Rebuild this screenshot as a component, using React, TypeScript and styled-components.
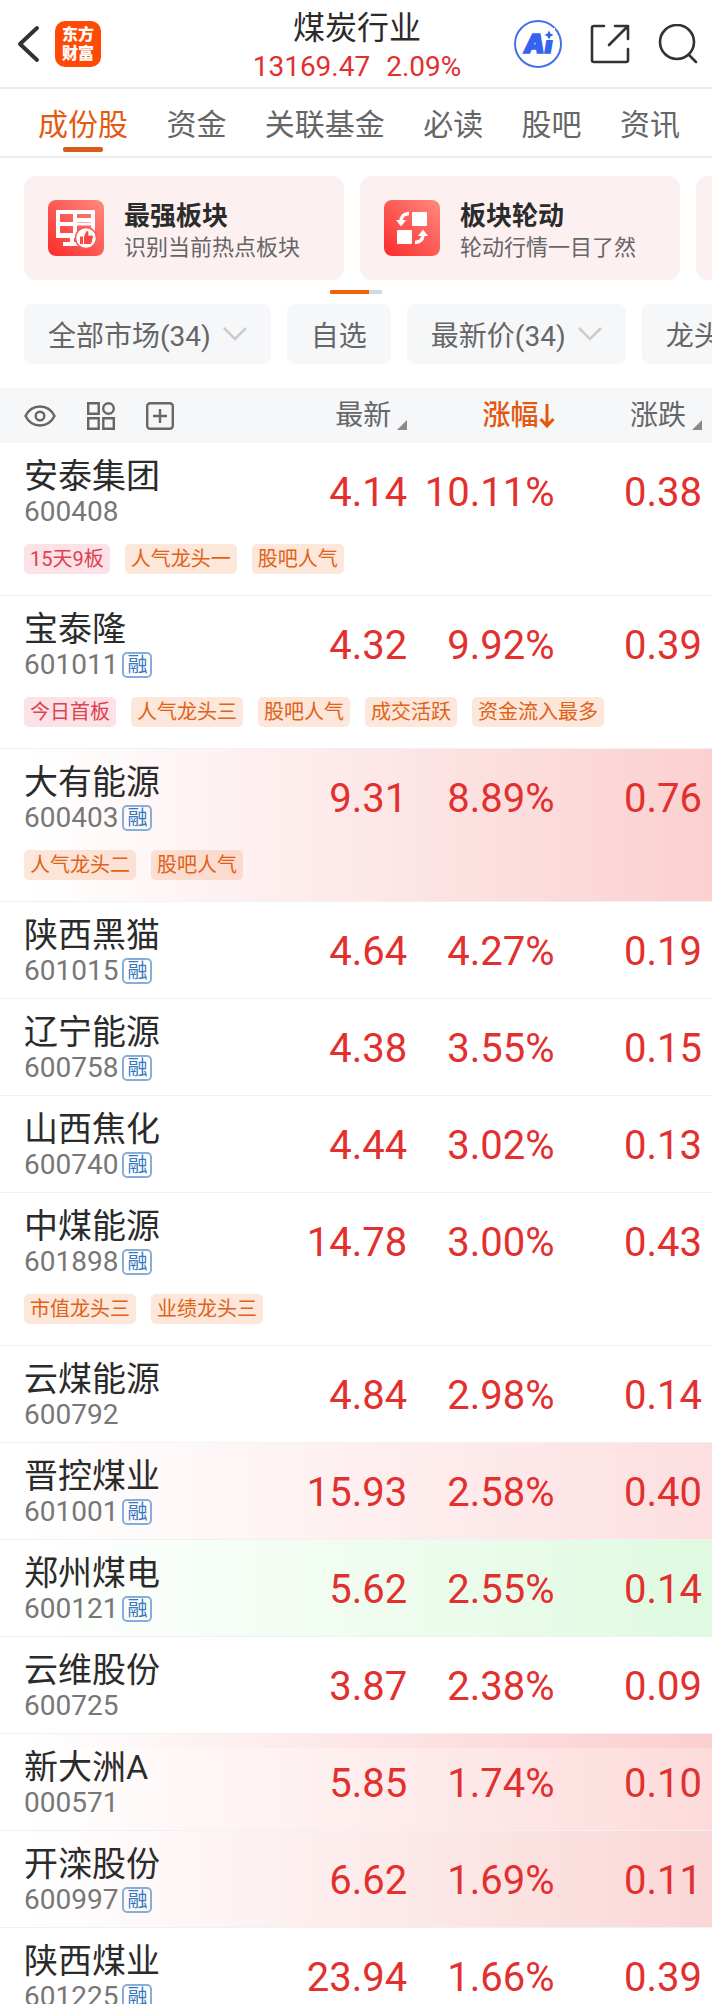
import React from "react";
import styled, { createGlobalStyle } from "styled-components";

const RED = "#e2302f";
const ORANGE = "#e2590f";

const GlobalStyle = createGlobalStyle`
  * { box-sizing: border-box; }
  html, body, #root { height: 100%; }
  body {
    margin: 0;
    background: #fff;
    color: #2b2b2b;
    font-family: Roboto, "Noto Sans CJK SC", sans-serif;
  }
  button {
    margin: 0;
    padding: 0;
    border: 0;
    background: none;
    color: inherit;
    font: inherit;
    cursor: pointer;
  }
  a { color: inherit; text-decoration: none; }
  h1, h2, p { margin: 0; font-weight: 400; }
  svg { display: block; flex: none; }
`;

const Page = styled.div`
  display: flex;
  flex-direction: column;
  height: 100vh;
  overflow: hidden;
`;

const Header = styled.header`
  display: grid;
  grid-template-columns: 1fr auto 1fr;
  align-items: center;
  flex: none;
  height: 89px;
  padding: 0 14px 0 16px;
  border-bottom: 2px solid #e9e9eb;
`;

const HeaderSide = styled.div<{ $end?: boolean }>`
  display: flex;
  align-items: center;
  justify-content: ${(p) => (p.$end ? "flex-end" : "flex-start")};
  gap: ${(p) => (p.$end ? "28px" : "13px")};
`;

const Logo = styled.a`
  display: flex;
  flex-direction: column;
  align-items: center;
  justify-content: center;
  width: 46px;
  height: 46px;
  border-radius: 10px;
  background: #ff4a05;
  color: #fff;
  font-size: 16px;
  font-weight: 900;
  line-height: 19px;
`;

const Heading = styled.div`
  padding-top: 4px;
  text-align: center;
`;

const Title = styled.h1`
  font-size: 32px;
  line-height: 40px;
`;

const Quote = styled.p`
  display: flex;
  justify-content: center;
  gap: 16px;
  margin-top: 3px;
  color: ${RED};
  font-size: 28px;
  line-height: 32px;
`;

const Tabs = styled.nav`
  display: flex;
  flex: none;
  justify-content: space-between;
  height: 69px;
  padding: 0 32px 0 38px;
  border-bottom: 2px solid #ececee;
`;

const Tab = styled.a<{ $active?: boolean }>`
  display: flex;
  flex-direction: column;
  align-items: center;
  padding-top: 16px;
  color: ${(p) => (p.$active ? ORANGE : "#666")};
  font-size: 30px;
  line-height: 40px;
  white-space: nowrap;

  &::after {
    content: "";
    width: 40px;
    height: 5px;
    margin-top: 2px;
    border-radius: 2px;
    background: ${(p) => (p.$active ? "#d95a1b" : "transparent")};
  }
`;

const Scroller = styled.div`
  display: flex;
  flex: none;
  gap: 16px;
  padding: 0 24px;
  overflow-x: auto;
  scrollbar-width: none;
`;

const Cards = styled(Scroller)`
  margin-top: 18px;
`;

const Card = styled.a`
  display: flex;
  flex: none;
  align-items: center;
  gap: 20px;
  width: 320px;
  height: 104px;
  padding: 0 24px;
  border-radius: 12px;
  background: #fdf0f0;
`;

const CardText = styled.div`
  padding-top: 8px;
`;

const CardTitle = styled.h2`
  font-size: 26px;
  font-weight: 700;
  line-height: 32px;
  white-space: nowrap;
`;

const CardNote = styled.p`
  color: #666;
  font-size: 22px;
  line-height: 32px;
  white-space: nowrap;
`;

const Pager = styled.div`
  flex: none;
  align-self: center;
  width: 52px;
  height: 4px;
  margin: 10px 0;
  border-radius: 1px;
  background: linear-gradient(to right, #f2600f 75%, #d5d8de 75%);
`;

const Filter = styled.button`
  display: flex;
  flex: none;
  align-items: center;
  gap: 12px;
  height: 60px;
  padding: 0 24px;
  border-radius: 8px;
  background: #f6f7f9;
  color: #666;
  font-size: 28px;
  white-space: nowrap;
`;

const ListArea = styled.main`
  flex: 1;
  min-height: 0;
  margin-top: 24px;
  overflow-y: auto;
  scrollbar-width: none;
`;

const Table = styled.table`
  display: block;
`;

const columns = `
  display: grid;
  grid-template-columns: 8fr 5fr 5fr 5fr;
  padding: 0 10px 0 24px;
`;

const Head = styled.thead`
  display: block;
  position: sticky;
  top: 0;
  background: #f6f7f9;
`;

const HeadRow = styled.tr`
  ${columns}
  height: 55px;
`;

const HeadCell = styled.th<{ $active?: boolean }>`
  display: flex;
  align-items: center;
  justify-content: flex-end;
  padding: 0;
  color: ${(p) => (p.$active ? ORANGE : "#666")};
  font-size: 28px;
  font-weight: ${(p) => (p.$active ? 500 : 400)};
`;

const Tools = styled.th`
  display: flex;
  align-items: center;
  gap: 31px;
  padding: 0;
  color: #666;
`;

const SortButton = styled.button<{ $tight?: boolean }>`
  display: flex;
  align-items: center;
  gap: ${(p) => (p.$tight ? "0" : "6px")};
  line-height: 32px;
  white-space: nowrap;
`;

const Corner = styled.span`
  align-self: flex-end;
  margin-bottom: 2px;
  border-left: 10px solid transparent;
  border-bottom: 10px solid #8a8a8a;
`;

const Body = styled.tbody`
  display: block;
`;

const Row = styled.tr<{ $flash?: string }>`
  ${columns}
  border-bottom: 1px solid #f0f1f3;
  background: ${(p) => p.$flash ?? "none"};
`;

const NameCell = styled.th`
  padding: 13px 0 11px;
  font-weight: 400;
  text-align: left;
  white-space: nowrap;
`;

const Name = styled.a`
  display: block;
  font-size: 34px;
  line-height: 40px;
`;

const CodeLine = styled.div`
  display: flex;
  align-items: center;
  gap: 4px;
  color: #777;
  font-size: 28px;
  line-height: 32px;
`;

const MarginBadge = styled.span`
  width: 30px;
  height: 26px;
  border: 2px solid #86aedb;
  border-radius: 5px;
  color: #3578bf;
  font-size: 20px;
  line-height: 22px;
  text-align: center;
`;

const Value = styled.td`
  padding: 3px 0 0;
  color: ${RED};
  font-size: 40px;
  line-height: 93px;
  text-align: right;
`;

const TagCell = styled.td`
  display: flex;
  grid-column: 1 / -1;
  gap: 15px;
  padding: 5px 0 21px;
`;

const Tag = styled.span<{ $hot?: boolean }>`
  height: 30px;
  padding: 0 6px;
  border-radius: 5px;
  background: ${(p) => (p.$hot ? "rgba(233, 45, 75, 0.14)" : "rgba(240, 100, 25, 0.16)")};
  color: ${(p) => (p.$hot ? "#dc4250" : "#e06216")};
  font-size: 20px;
  line-height: 30px;
  white-space: nowrap;
`;

type Stock = {
  name: string;
  code: string;
  margin?: boolean;
  price: string;
  pct: string;
  change: string;
  tags?: string[];
  hot?: string;
  flash?: string;
};

const fade = (color: string) => `linear-gradient(to right, #fff 4%, ${color})`;

const stocks: Stock[] = [
  { name: "安泰集团", code: "600408", price: "4.14", pct: "10.11%", change: "0.38", hot: "15天9板", tags: ["人气龙头一", "股吧人气"] },
  { name: "宝泰隆", code: "601011", margin: true, price: "4.32", pct: "9.92%", change: "0.39", hot: "今日首板", tags: ["人气龙头三", "股吧人气", "成交活跃", "资金流入最多"] },
  { name: "大有能源", code: "600403", margin: true, price: "9.31", pct: "8.89%", change: "0.76", tags: ["人气龙头二", "股吧人气"], flash: fade("#fbd0d0") },
  { name: "陕西黑猫", code: "601015", margin: true, price: "4.64", pct: "4.27%", change: "0.19" },
  { name: "辽宁能源", code: "600758", margin: true, price: "4.38", pct: "3.55%", change: "0.15" },
  { name: "山西焦化", code: "600740", margin: true, price: "4.44", pct: "3.02%", change: "0.13" },
  { name: "中煤能源", code: "601898", margin: true, price: "14.78", pct: "3.00%", change: "0.43", tags: ["市值龙头三", "业绩龙头三"] },
  { name: "云煤能源", code: "600792", price: "4.84", pct: "2.98%", change: "0.14" },
  { name: "晋控煤业", code: "601001", margin: true, price: "15.93", pct: "2.58%", change: "0.40", flash: fade("#fddfe0") },
  { name: "郑州煤电", code: "600121", margin: true, price: "5.62", pct: "2.55%", change: "0.14", flash: fade("#dffae0") },
  { name: "云维股份", code: "600725", price: "3.87", pct: "2.38%", change: "0.09" },
  {
    name: "新大洲A", code: "000571", price: "5.85", pct: "1.74%", change: "0.10",
    flash: `linear-gradient(to right, transparent 4%, rgba(245, 130, 130, 0.14)) 0 0 / 100% 14px no-repeat, ${fade("#fddbdb")}`,
  },
  { name: "开滦股份", code: "600997", margin: true, price: "6.62", pct: "1.69%", change: "0.11", flash: fade("#fad7d6") },
  { name: "陕西煤业", code: "601225", margin: true, price: "23.94", pct: "1.66%", change: "0.39" },
];

const BackIcon = () => (
  <svg width="26" height="40" viewBox="0 0 26 40" fill="none" stroke="#333" strokeWidth="4" strokeLinecap="round" strokeLinejoin="round">
    <path d="M21 4 4 20l17 16" />
  </svg>
);

const AiIcon = () => (
  <svg width="48" height="48" viewBox="0 0 48 48">
    <circle cx="24" cy="24" r="23" fill="none" stroke="#4470e8" strokeWidth="2" />
    <text x="10" y="33" fill="#3563f0" stroke="#3563f0" strokeWidth="1.5" fontFamily="Inter, sans-serif" fontSize="26" fontWeight="900" fontStyle="italic">Ai</text>
    <path d="M30 8h11v12H30z" fill="#fff" />
    <path d="M35 10.500l1.500 3 3 1.500-3 1.500-1.500 3-1.500-3-3-1.500 3-1.500z" fill="#3563f0" />
  </svg>
);

const ShareIcon = () => (
  <svg width="40" height="40" viewBox="0 0 40 40" fill="none" stroke="#333" strokeWidth="2.600" strokeLinecap="round" strokeLinejoin="round">
    <path d="M14 2H4a2 2 0 0 0-2 2v32a2 2 0 0 0 2 2h32a2 2 0 0 0 2-2V25" />
    <path d="M25 2h13v13M37 3 19 21" />
  </svg>
);

const SearchIcon = () => (
  <svg width="40" height="40" viewBox="0 0 40 40" fill="none" stroke="#333" strokeWidth="2.600" strokeLinecap="round">
    <circle cx="19" cy="18" r="17" />
    <path d="m31 31 7 7" />
  </svg>
);

const CardIconBase = ({ id, children }: { id: string; children: React.ReactNode }) => (
  <svg width="56" height="56" viewBox="0 0 56 56">
    <defs>
      <linearGradient id={id} x1="1" y1="0" x2="0" y2="1">
        <stop offset="0" stopColor="#ff8a80" />
        <stop offset="1" stopColor="#fb2b2b" />
      </linearGradient>
    </defs>
    <rect width="56" height="56" rx="8" fill={`url(#${id})`} />
    {children}
  </svg>
);

const BoardIcon = () => (
  <CardIconBase id="board">
    <path
      fill="#fff"
      fillRule="evenodd"
      d="M8 10h39v28H8zM12 14v8h13v-8zM12 26v7h13v-7zM29 14v4h14v-4zM29 22v11h14V22z"
    />
    <path d="M29 24h14" stroke="#fff" strokeWidth="3" />
    <path d="M24 37v6M15 44h15" stroke="#fff" strokeWidth="4" />
    <circle cx="38" cy="38" r="10.500" fill="#fff" stroke="#fb5b52" strokeWidth="1.500" />
    <path d="M32 36.500h3v7.500h-3zM36 36.500l2.500-5.500c2 0 2.500 2 1.700 4.500h3.300c1.500 0 1.500 1.500 1.200 2.500l-1.200 4.500c-.3 1-1 1.500-2 1.500H36z" fill="#fb4a42" />
  </CardIconBase>
);

const RotateIcon = () => (
  <CardIconBase id="rotate">
    <rect x="28" y="12" width="15" height="14" rx="1" fill="#fff" />
    <rect x="13" y="30" width="15" height="14" rx="1" fill="#fff" />
    <path d="M25 13.500c-5 0-8 3-8 8M31 42.500c5 0 8-3 8-8" fill="none" stroke="#fff" strokeWidth="3.500" />
    <path d="M12 20h10l-5 6.500zM34 36h10l-5-6.500z" fill="#fff" />
  </CardIconBase>
);

const Chevron = () => (
  <svg width="24" height="16" viewBox="0 0 24 16" fill="none" stroke="#ccc" strokeWidth="2.500">
    <path d="m1 2 11 11L23 2" />
  </svg>
);

const EyeIcon = () => (
  <svg width="32" height="24" viewBox="0 0 32 24" fill="none" stroke="currentColor" strokeWidth="2.400">
    <path d="M1.500 12C5 5 10 2.500 16 2.500S27 5 30.500 12C27 19 22 21.500 16 21.500S5 19 1.500 12z" />
    <circle cx="16" cy="12" r="4.300" />
  </svg>
);

const GridIcon = () => (
  <svg width="28" height="28" viewBox="0 0 28 28" fill="none" stroke="currentColor" strokeWidth="2.400">
    <path d="M1.200 1.200h10.500v10.500H1.200zM1.200 16.300h10.500v10.500H1.200zM16.300 16.300h10.500v10.500H16.300z" />
    <circle cx="21.500" cy="6.500" r="5.300" />
  </svg>
);

const PlusIcon = () => (
  <svg width="28" height="28" viewBox="0 0 28 28" fill="none" stroke="currentColor" strokeWidth="2.400">
    <rect x="1.200" y="1.200" width="25.600" height="25.600" rx="3" />
    <path d="M14 7v14M7 14h14" />
  </svg>
);

const SortArrow = () => (
  <svg width="16" height="26" viewBox="0 0 16 26" fill="none" stroke="currentColor" strokeWidth="3">
    <path d="M8 1v22M1.500 16 8 23l6.500-7" />
  </svg>
);

const tabNames = ["成份股", "资金", "关联基金", "必读", "股吧", "资讯"];

export default function App() {
  return (
    <Page>
      <GlobalStyle />
      <Header>
        <HeaderSide>
          <button aria-label="返回"><BackIcon /></button>
          <Logo href="#home"><span>东方</span><span>财富</span></Logo>
        </HeaderSide>
        <Heading>
          <Title>煤炭行业</Title>
          <Quote><span>13169.47</span><span>2.09%</span></Quote>
        </Heading>
        <HeaderSide $end>
          <button aria-label="智能助手"><AiIcon /></button>
          <button aria-label="分享"><ShareIcon /></button>
          <button aria-label="搜索"><SearchIcon /></button>
        </HeaderSide>
      </Header>

      <Tabs>
        {tabNames.map((t, i) => (
          <Tab key={t} href={`#tab${i}`} $active={i === 0}>{t}</Tab>
        ))}
      </Tabs>

      <Cards>
        <Card href="#strongest">
          <BoardIcon />
          <CardText>
            <CardTitle>最强板块</CardTitle>
            <CardNote>识别当前热点板块</CardNote>
          </CardText>
        </Card>
        <Card href="#rotation">
          <RotateIcon />
          <CardText>
            <CardTitle>板块轮动</CardTitle>
            <CardNote>轮动行情一目了然</CardNote>
          </CardText>
        </Card>
        <Card href="#more" aria-label="更多" />
      </Cards>
      <Pager />

      <Scroller>
        <Filter>全部市场(34)<Chevron /></Filter>
        <Filter>自选</Filter>
        <Filter>最新价(34)<Chevron /></Filter>
        <Filter>龙头</Filter>
      </Scroller>

      <ListArea>
        <Table>
          <Head>
            <HeadRow>
              <Tools>
                <button aria-label="显示"><EyeIcon /></button>
                <button aria-label="布局"><GridIcon /></button>
                <button aria-label="添加"><PlusIcon /></button>
              </Tools>
              <HeadCell><SortButton>最新<Corner /></SortButton></HeadCell>
              <HeadCell $active><SortButton $tight>涨幅<SortArrow /></SortButton></HeadCell>
              <HeadCell><SortButton>涨跌<Corner /></SortButton></HeadCell>
            </HeadRow>
          </Head>
          <Body>
            {stocks.map((s) => (
              <Row key={s.code} $flash={s.flash}>
                <NameCell scope="row">
                  <Name href={`#${s.code}`}>{s.name}</Name>
                  <CodeLine>
                    {s.code}
                    {s.margin && <MarginBadge>融</MarginBadge>}
                  </CodeLine>
                </NameCell>
                <Value>{s.price}</Value>
                <Value>{s.pct}</Value>
                <Value>{s.change}</Value>
                {s.tags && (
                  <TagCell colSpan={4}>
                    {s.hot && <Tag $hot>{s.hot}</Tag>}
                    {s.tags.map((t) => <Tag key={t}>{t}</Tag>)}
                  </TagCell>
                )}
              </Row>
            ))}
          </Body>
        </Table>
      </ListArea>
    </Page>
  );
}
